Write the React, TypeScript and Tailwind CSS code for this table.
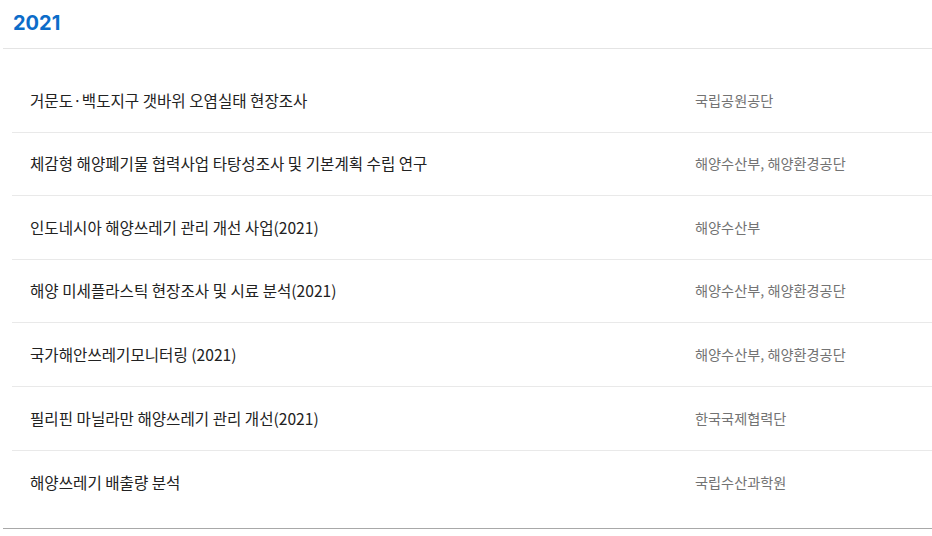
const PROJECTS: { title: string; org: string }[] = [
  { title: '거문도·백도지구 갯바위 오염실태 현장조사', org: '국립공원공단' },
  { title: '체감형 해양폐기물 협력사업 타탕성조사 및 기본계획 수립 연구', org: '해양수산부, 해양환경공단' },
  { title: '인도네시아 해양쓰레기 관리 개선 사업(2021)', org: '해양수산부' },
  { title: '해양 미세플라스틱 현장조사 및 시료 분석(2021)', org: '해양수산부, 해양환경공단' },
  { title: '국가해안쓰레기모니터링 (2021)', org: '해양수산부, 해양환경공단' },
  { title: '필리핀 마닐라만 해양쓰레기 관리 개선(2021)', org: '한국국제협력단' },
  { title: '해양쓰레기 배출량 분석', org: '국립수산과학원' },
];

export default function App() {
  return (
    <div
      className="min-h-screen bg-white pl-[3px]"
      style={{ fontFamily: '"Noto Sans CJK KR", "Noto Sans", sans-serif' }}
    >
      {/* year heading */}
      <div className="flex h-[49px] items-center border-b border-[#e4e4e4] pb-[3px] pl-[10px]">
        <h2 className="font-['Inter',sans-serif] text-[20px] font-bold text-[#0c6cc9]">2021</h2>
      </div>

      <ul className="ml-[9px] mt-[20px] pb-[14px]">
        {PROJECTS.map((p, i) => (
          <li
            key={p.title}
            className={`grid h-[63.6px] grid-cols-[1fr_237px] items-center ${
              i < PROJECTS.length - 1 ? 'border-b border-[#e9e9e9]' : ''
            }`}
          >
            <span className="pl-[18px] text-[15.6px] text-[#222]">{p.title}</span>
            <span className="text-[14.2px] text-[#737373]">{p.org}</span>
          </li>
        ))}
      </ul>
      <div className="border-b border-[#a8a8a8]" />
    </div>
  );
}
